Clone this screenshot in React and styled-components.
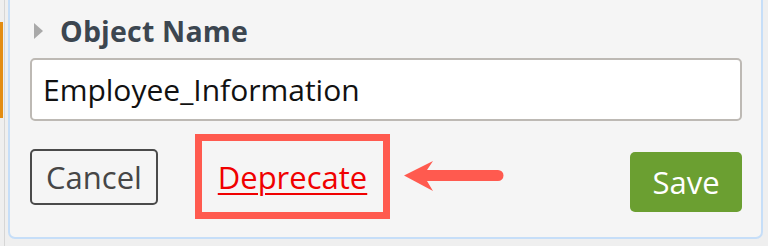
import React from "react";
import styled, { createGlobalStyle } from "styled-components";

const FONT = `"Open Sans", Lato, sans-serif`;

const Global = createGlobalStyle`
  html, body { margin: 0; padding: 0; }
  body {
    background: #efefef;
    font-family: ${FONT};
    width: 768px;
    height: 246px;
    overflow: hidden;
  }
`;

const Page = styled.div`
  display: flex;
  height: 246px;
`;

const Gutter = styled.div`
  width: 8px;
  display: flex;
  flex-shrink: 0;
`;

const Indicator = styled.div`
  width: 3px;
  height: 96px;
  margin-top: 22px;
  background: #e48d12;
`;

const RailLine = styled.div`
  width: 1px;
  margin-left: 1px;
  background: #d6d6d6;
`;

const Panel = styled.div`
  width: 755px;
  height: 250px;
  margin-top: -11px;
  border: 2px solid #c6def8;
  border-radius: 7px;
  background: #f5f5f5;
  padding: 0 19px 0 20px;
  box-sizing: border-box;
  display: flex;
  flex-direction: column;
`;

const Header = styled.div`
  display: flex;
  align-items: center;
  height: 40px;
  margin-top: 20px;
  padding-left: 4px;
`;

const Caret = styled.span`
  width: 0;
  height: 0;
  border-top: 8px solid transparent;
  border-bottom: 8px solid transparent;
  border-left: 9px solid #a9a9a9;
  margin-right: 17px;
`;

const Title = styled.h2`
  margin: 0;
  font-size: 28.5px;
  letter-spacing: 0.2px;
  font-weight: 700;
  color: #3c4650;
`;

const TextInput = styled.input`
  margin-top: 7px;
  height: 63px;
  box-sizing: border-box;
  border: 2px solid #bdb9b4;
  border-radius: 5px;
  background: #fff;
  padding: 0 11px;
  font-family: ${FONT};
  font-size: 30px;
  color: #111;
  outline: none;
  width: 100%;
`;

const Actions = styled.div`
  display: flex;
  align-items: center;
  margin-top: 13px;
`;

const OutlineButton = styled.button`
  width: 128px;
  height: 56px;
  box-sizing: border-box;
  border: 2px solid #4a4a4a;
  border-radius: 5px;
  background: transparent;
  font-family: ${FONT};
  font-size: 31px;
  color: #464646;
  padding: 0;
`;

const Highlight = styled.div`
  margin-left: 37px;
  width: 195px;
  height: 85px;
  box-sizing: border-box;
  border: 7px solid #ff5a4f;
  display: flex;
  align-items: center;
  justify-content: center;
`;

const LinkText = styled.a`
  font-size: 31px;
  color: #f00000;
  text-decoration: underline;
  text-underline-offset: 4px;
  text-decoration-thickness: 2px;
`;

const Arrow = styled.svg`
  margin-left: 14px;
  display: block;
`;

const PrimaryButton = styled.button`
  margin-left: auto;
  margin-top: 11px;
  width: 112px;
  height: 60px;
  border: none;
  border-radius: 5px;
  background: #6b9f31;
  color: #fff;
  font-family: ${FONT};
  font-size: 31px;
  padding: 0;
`;

export default function App() {
  return (
    <>
      <Global />
      <Page>
        <Gutter>
          <Indicator />
          <RailLine />
        </Gutter>
        <Panel>
          <Header>
            <Caret />
            <Title>Object Name</Title>
          </Header>
          <TextInput defaultValue="Employee_Information" />
          <Actions>
            <OutlineButton>Cancel</OutlineButton>
            <Highlight>
              <LinkText href="#">Deprecate</LinkText>
            </Highlight>
            <Arrow width="100" height="31" viewBox="0 0 100 31">
              <path
                d="M0 14.5 L29 0 L23 9 L94 9 A5.5 5.5 0 0 1 94 20 L23 20 L29 30 Z"
                fill="#ff5a4f"
              />
            </Arrow>
            <PrimaryButton>Save</PrimaryButton>
          </Actions>
        </Panel>
      </Page>
    </>
  );
}
